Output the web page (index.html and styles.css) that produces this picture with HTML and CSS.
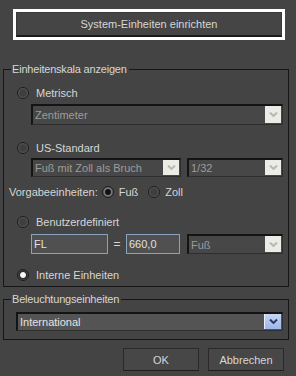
FILE: index.html
```html
<!DOCTYPE html>
<html lang="de">
<head>
    <meta charset="UTF-8">
    <meta name="viewport" content="width=device-width, initial-scale=1.0">
    <title>Einheiten einrichten</title>
    <link rel="stylesheet" href="styles.css">
</head>
<body>
    <!-- Systemeinheiten -->
    <div class="setup-frame">
        <button class="setup-btn">System-Einheiten einrichten</button>
    </div>

    <!-- Einheitenskala -->
    <fieldset class="group group-scale">
        <legend>Einheitenskala anzeigen</legend>

        <div class="radio-row row-metric"><span class="radio"></span>Metrisch</div>
        <div class="combo combo-wide combo-disabled">
            <span class="combo-text">Zentimeter</span>
            <span class="combo-arrow"><svg width="9" height="5" viewBox="0 0 9 5"><path d="M1 0.5 L4.5 4 L8 0.5" fill="none" stroke="#b8b8b0" stroke-width="2"/></svg></span>
        </div>

        <div class="radio-row row-us"><span class="radio"></span>US-Standard</div>
        <div class="combo-line">
            <div class="combo combo-feet combo-disabled">
                <span class="combo-text">Fuß mit Zoll als Bruch</span>
                <span class="combo-arrow"><svg width="9" height="5" viewBox="0 0 9 5"><path d="M1 0.5 L4.5 4 L8 0.5" fill="none" stroke="#b8b8b0" stroke-width="2"/></svg></span>
            </div>
            <div class="combo combo-small combo-disabled">
                <span class="combo-text">1/32</span>
                <span class="combo-arrow"><svg width="9" height="5" viewBox="0 0 9 5"><path d="M1 0.5 L4.5 4 L8 0.5" fill="none" stroke="#b8b8b0" stroke-width="2"/></svg></span>
            </div>
        </div>

        <div class="default-row">
            <span>Vorgabeeinheiten:</span>
            <span class="radio radio-dot"></span><span>Fuß</span>
            <span class="radio"></span><span>Zoll</span>
        </div>

        <div class="radio-row row-custom"><span class="radio"></span>Benutzerdefiniert</div>
        <div class="combo-line custom-line">
            <div class="field field-name">FL</div>
            <span class="equals">=</span>
            <div class="field field-value">660,0</div>
            <div class="combo combo-small combo-disabled">
                <span class="combo-text">Fuß</span>
                <span class="combo-arrow"><svg width="9" height="5" viewBox="0 0 9 5"><path d="M1 0.5 L4.5 4 L8 0.5" fill="none" stroke="#b8b8b0" stroke-width="2"/></svg></span>
            </div>
        </div>

        <div class="radio-row row-internal"><span class="radio radio-on"></span>Interne Einheiten</div>
    </fieldset>

    <!-- Beleuchtung -->
    <fieldset class="group group-light">
        <legend>Beleuchtungseinheiten</legend>
        <div class="combo combo-light">
            <span class="combo-text">International</span>
            <span class="combo-arrow arrow-blue"><svg width="9" height="5" viewBox="0 0 9 5"><path d="M1 0.5 L4.5 4 L8 0.5" fill="none" stroke="#2a3a60" stroke-width="2"/></svg></span>
        </div>
    </fieldset>

    <div class="actions">
        <button class="dlg-btn">OK</button>
        <button class="dlg-btn">Abbrechen</button>
    </div>
</body>
</html>
```

FILE: styles.css
```css
body, html {
    margin: 0;
    padding: 0;
    width: 296px;
    height: 376px;
    background-color: #444444;
    color: #d6d6d6;
    font-family: 'Liberation Sans', Arial, sans-serif;
    font-size: 11px;
    overflow: hidden;
}

.setup-frame {
    margin: 9px 0 0 13px;
    width: 266px;
    height: 25px;
    border: 3px solid #ffffff;
}
.setup-btn {
    display: block;
    width: 100%;
    height: 100%;
    margin: 0;
    padding: 0 0 1px 0;
    background-color: #454545;
    border: 1px solid #3a3a3a;
    border-bottom: 2px solid #1a1a1a;
    color: #d6d6d6;
    font-family: inherit;
    font-size: 11px;
}

.group {
    margin: 0 7px 0 3px;
    padding: 0 5px 4px 5px;
    border: 1px solid #161616;
    min-width: 0;
}
.group legend {
    margin-left: 2px;
    padding: 0 2px 0 1px;
    font-size: 11px;
    line-height: 14px;
    letter-spacing: -0.2px;
    color: #d6d6d6;
}
.group-scale { margin-top: 22px; padding-top: 10px; }
.group-light { margin-top: 5px; padding-top: 6px; padding-bottom: 8px; }

.radio-row {
    display: flex;
    align-items: center;
    margin-left: 8px;
    height: 14px;
}
.radio {
    width: 10px;
    height: 10px;
    margin-right: 7px;
    border-radius: 50%;
    border: 1px solid #1c1c1c;
    background: radial-gradient(circle at 50% 50%, #3e3e3e 0, #3e3e3e 45%, #606060 75%, #2a2a2a 100%);
    flex-shrink: 0;
}
.radio-on {
    background: radial-gradient(circle at 50% 50%, #ffffff 0, #f0f0f0 35%, #2a2a2a 50%, #5a5a5a 80%, #222 100%);
}
.radio-dot {
    background: radial-gradient(circle at 50% 50%, #111 0, #111 35%, #7a7a7a 50%, #555 80%, #222 100%);
}
.row-us { margin-top: 16px; }
.row-custom { margin-top: 16px; }
.row-internal { margin-top: 14px; }

.combo {
    display: flex;
    align-items: center;
    box-sizing: border-box;
    background-color: #474747;
    border-top: 2px solid #141414;
    border-left: 2px solid #141414;
    border-right: 1px solid #2e2e2e;
    border-bottom: 1px solid #2e2e2e;
    padding-left: 2px;
}
.combo-text {
    flex: 1;
    white-space: nowrap;
    overflow: hidden;
}
.combo-disabled .combo-text { color: #9c9c9c; }
.combo-arrow {
    width: 16px;
    align-self: stretch;
    display: flex;
    align-items: center;
    justify-content: center;
    background-color: #ecece6;
    margin: 0 1px 1px 0;
}
.arrow-blue {
    background: linear-gradient(#c6d6f6, #9cb6ea);
    border-left: 1px solid #e8eefc;
}
.combo-wide {
    margin: 4px 0 0 22px;
    height: 21px;
}
.combo-line {
    display: flex;
    align-items: center;
    margin: 3px 0 0 22px;
    gap: 6px;
}
.combo-line .combo { height: 19px; }
.combo-feet { width: 150px; }
.combo-small { width: 96px; margin-left: auto; }

.default-row {
    display: flex;
    align-items: center;
    height: 14px;
    margin-top: 8px;
}
.default-row .radio { margin-right: 5px; }
.default-row span:first-child { margin-right: 4px; }
.default-row span:nth-child(3) { margin-right: 10px; }

.custom-line { margin-top: 5px; gap: 0; }
.custom-line .combo { height: 20px; }
.field {
    box-sizing: border-box;
    height: 20px;
    line-height: 18px;
    border: 1px solid #8aa2be;
    background-color: #505050;
    padding-left: 2px;
    color: #e0e0e0;
}
.field-name { width: 77px; }
.field-value { width: 54px; }
.equals {
    width: 18px;
    text-align: center;
    font-size: 12px;
}

.combo-light {
    margin-left: 7px;
    height: 19px;
    background-color: #545454;
    color: #e4e4e4;
}

.actions {
    display: flex;
    justify-content: flex-end;
    gap: 9px;
    margin: 8px 12px 0 0;
}
.dlg-btn {
    width: 76px;
    height: 23px;
    margin: 0;
    background-color: #474747;
    border: 1px solid #2a2a2a;
    border-bottom-color: #1e1e1e;
    color: #d6d6d6;
    font-family: inherit;
    font-size: 11px;
}
```
